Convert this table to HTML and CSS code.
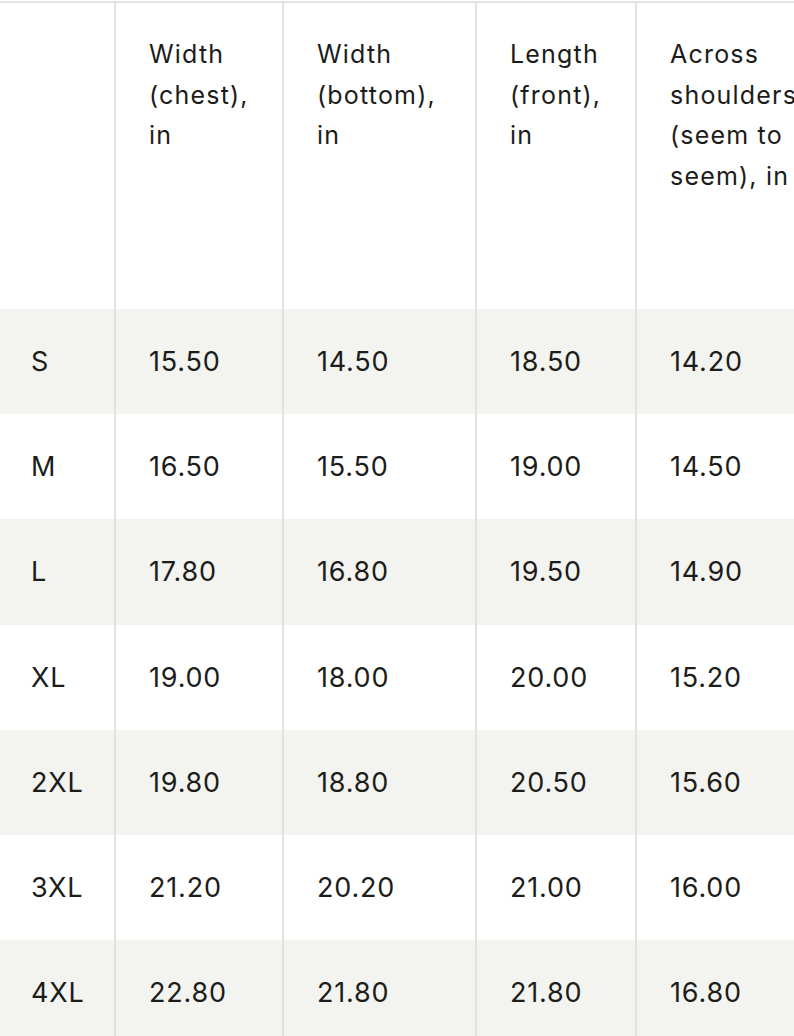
FILE: index.html
```html
<!DOCTYPE html>
<html lang="en">
<head>
<meta charset="utf-8">
<title>Size chart</title>
<link rel="stylesheet" href="styles.css">
</head>
<body>
<div class="wrap">
<table class="sizes">
  <colgroup>
    <col class="c0"><col class="c1"><col class="c2"><col class="c3"><col class="c4">
  </colgroup>
  <thead>
    <tr>
      <th></th>
      <th>Width<br>(chest),<br>in</th>
      <th>Width<br>(bottom),<br>in</th>
      <th>Length<br>(front),<br>in</th>
      <th>Across<br>shoulders<br>(seem to<br>seem), in</th>
    </tr>
  </thead>
  <tbody>
    <tr class="shade"><td>S</td><td>15.50</td><td>14.50</td><td>18.50</td><td>14.20</td></tr>
    <tr><td>M</td><td>16.50</td><td>15.50</td><td>19.00</td><td>14.50</td></tr>
    <tr class="shade"><td>L</td><td>17.80</td><td>16.80</td><td>19.50</td><td>14.90</td></tr>
    <tr><td>XL</td><td>19.00</td><td>18.00</td><td>20.00</td><td>15.20</td></tr>
    <tr class="shade"><td>2XL</td><td>19.80</td><td>18.80</td><td>20.50</td><td>15.60</td></tr>
    <tr><td>3XL</td><td>21.20</td><td>20.20</td><td>21.00</td><td>16.00</td></tr>
    <tr class="shade"><td>4XL</td><td>22.80</td><td>21.80</td><td>21.80</td><td>16.80</td></tr>
  </tbody>
</table>
</div>
</body>
</html>
```
FILE: styles.css
```css
html, body {
  margin: 0;
  padding: 0;
  background: #ffffff;
  overflow: hidden;
}
.wrap {
  width: 794px;
  height: 1036px;
  overflow: hidden;
  padding-top: 1px;
  box-sizing: border-box;
}
.sizes {
  border-collapse: collapse;
  table-layout: fixed;
  width: 900px;
  font-family: Inter, "Liberation Sans", sans-serif;
  color: #1c1c1a;
  border-top: 2px solid #e4e4e0;
}
.c0 { width: 115px; }
.c1 { width: 168px; }
.c2 { width: 193px; }
.c3 { width: 160px; }
.c4 { width: 264px; }
.sizes th, .sizes td {
  border-left: 2px solid #e2e2de;
  text-align: left;
  font-weight: 400;
}
.sizes th:first-child, .sizes td:first-child {
  border-left: none;
}
.sizes th {
  height: 307px;
  vertical-align: top;
  padding: 31px 0 0 33px;
  font-size: 25px;
  line-height: 40.7px;
  letter-spacing: 1.2px;
  box-sizing: border-box;
}
.sizes td {
  height: 105.2px;
  padding: 0 0 0 33px;
  vertical-align: middle;
  font-size: 27px;
  letter-spacing: 0.8px;
  box-sizing: border-box;
}
.sizes td:first-child {
  padding-left: 31px;
}
.sizes tr.shade td {
  background: #f3f3ef;
}
```
